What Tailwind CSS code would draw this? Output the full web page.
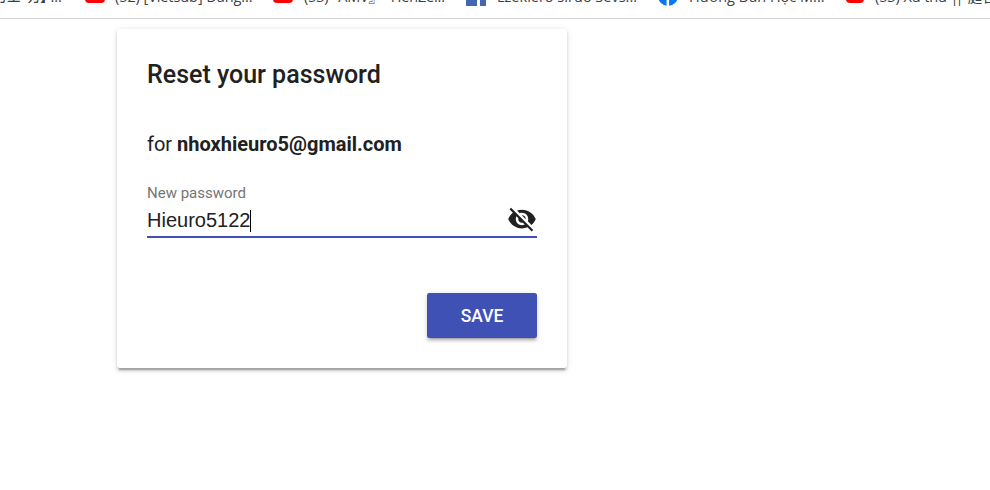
<!DOCTYPE html>
<html lang="en">
<head>
<meta charset="utf-8">
<title>Reset your password</title>
<script src="https://cdn.jsdelivr.net/npm/@tailwindcss/browser@4"></script>
</head>
<body class="h-[490px] w-[990px] overflow-hidden bg-white font-[Roboto,sans-serif] text-[#212121]">
<header class="flex h-[19px] items-start overflow-hidden border-b border-[#d5d6d8] font-['Open_Sans','Noto_Sans_CJK_JP',sans-serif] text-[14.5px] leading-5 text-[#3c4043]">
  <div class="-mt-[15px] flex w-[990px] shrink-0 whitespace-nowrap">
    <div class="flex w-[85px] shrink-0"><span class="mt-0.5 -ml-[7px] tracking-[-1px]">カエ- カ】<span class="-ml-[3px] tracking-normal">...</span></span></div>
    <div class="flex w-[188px] shrink-0 gap-[10px]"><span class="mt-1 h-[14px] w-5 shrink-0 rounded bg-[#f00]"></span><span class="mt-0.5 tracking-[-0.08px]">(52) [Vietsub] Đằng...</span></div>
    <div class="flex w-[193px] shrink-0 gap-[11px]"><span class="mt-1 h-[14px] w-5 shrink-0 rounded bg-[#f00]"></span><span class="mt-0.5 tracking-[-0.2px]">(53) <span class="-ml-[8px]">『</span>AMV』- HenZe...</span></div>
    <div class="flex w-[192px] shrink-0 gap-[11px]"><svg class="mt-px h-5 w-5 shrink-0" viewBox="0 0 20 20"><path fill="#4267b2" d="M0 0h20v20H0z"/><path fill="#fff" d="M11 11h3v9h-3z"/></svg><span class="mt-0.5">Lzekiero s.ruo Sevs...</span></div>
    <div class="flex w-[188px] shrink-0 gap-[11px]"><svg class="mt-px h-5 w-5 shrink-0" viewBox="0 0 20 20"><circle cx="10" cy="10" r="10" fill="#0877f2"/><path fill="#fff" d="M8.600 20v-8H6V9h2.600V7c0-3 2-4 5-3v2c-2 0-2.500 0-2.500 3h2.500v3h-2.500v8z"/></svg><span class="mt-0.5">Hướng Dẫn Học M...</span></div>
    <div class="flex shrink-0 gap-[11px]"><span class="mt-1 h-[14px] w-[18px] shrink-0 rounded bg-[#f00]"></span><span class="mt-0.5 tracking-[-0.1px]">(53) Xu thu <span class="tracking-[-3px]">||</span>&nbsp; 庭言</span></div>
  </div>
</header>
<main class="mt-[10px] ml-[117px] flex h-[339px] w-[450px] flex-col rounded-[3px] bg-white px-[30px] pt-[31px] pb-[30px] shadow-[0_2.5px_2.5px_0_rgba(0,0,0,0.14),0_3.75px_1.25px_-2.5px_rgba(0,0,0,0.2),0_1.25px_6.25px_0_rgba(0,0,0,0.12)]">
  <h1 class="h-[30px] text-[25px] leading-[30px] font-medium whitespace-nowrap">Reset your password</h1>
  <p class="mt-[39px] h-[30px] text-[20px] leading-[30px] whitespace-nowrap">for <b class="font-bold">nhoxhieuro5@gmail.com</b></p>
  <label for="password" class="mt-[24px] h-[20px] text-[15px] leading-[20px] text-[#757575]">New password</label>
  <div class="flex h-[35px] items-start justify-between border-b-2 border-[#3f51b5]">
    <div id="password" class="mt-[6px] flex items-center font-['Liberation_Sans',Arial,sans-serif] text-[20px] leading-[23px]">Hieuro5122<span class="h-[22px] w-px bg-black"></span></div>
    <svg class="mt-px h-[30px] w-[30px]" viewBox="0 0 24 24" fill="#212121"><path d="M12 7c2.760 0 5 2.240 5 5 0 .65-.13 1.260-.36 1.830l2.920 2.920c1.510-1.260 2.700-2.890 3.430-4.750-1.730-4.390-6-7.500-11-7.500-1.400 0-2.740.25-3.980.7l2.160 2.160C10.740 7.130 11.350 7 12 7zM2 4.270l2.280 2.280.46.46C3.080 8.300 1.780 10.020 1 12c1.730 4.390 6 7.500 11 7.500 1.550 0 3.030-.3 4.380-.84l.42.42L19.730 22 21 20.730 3.270 3 2 4.270zM7.530 9.800l1.550 1.550c-.05.21-.08.43-.08.65 0 1.660 1.340 3 3 3 .22 0 .44-.03.65-.08l1.550 1.550c-.67.33-1.410.53-2.200.53-2.760 0-5-2.240-5-5 0-.79.2-1.530.53-2.200zm4.310-.78l3.150 3.150.02-.16c0-1.660-1.340-3-3-3l-.17.01z"/></svg>
  </div>
  <button class="mt-auto h-[45px] w-[110px] self-end rounded-[2.5px] bg-[#3f51b5] pt-px text-[17.500px] leading-[45px] font-medium text-white shadow-[0_2.5px_2.5px_0_rgba(0,0,0,0.14),0_3.75px_1.25px_-2.5px_rgba(0,0,0,0.2),0_1.25px_6.25px_0_rgba(0,0,0,0.12)]">SAVE</button>
</main>
</body>
</html>
